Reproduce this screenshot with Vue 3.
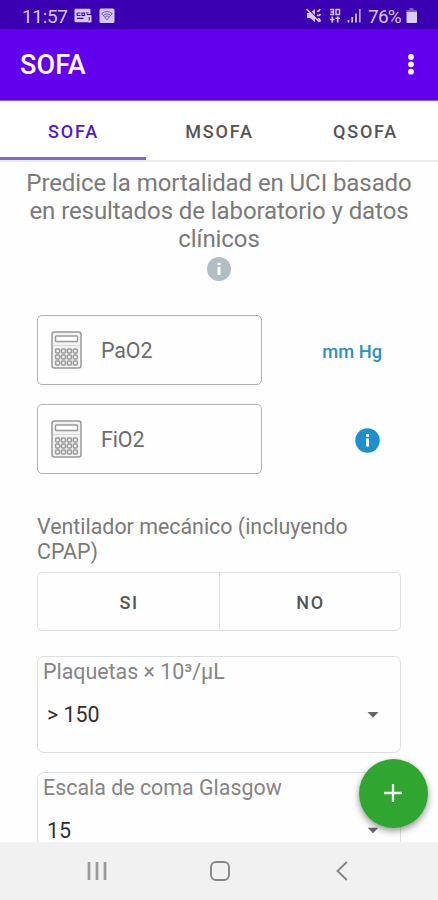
<script setup>
import { ref } from 'vue'

const tabs = ['SOFA', 'MSOFA', 'QSOFA']
const active = ref(0)
const inputs = [
  { label: 'PaO2', unit: 'mm Hg' },
  { label: 'FiO2', unit: '' },
]
const selects = [
  { label: 'Plaquetas × 10³/µL', value: '> 150' },
  { label: 'Escala de coma Glasgow', value: '15' },
]
const keyRows = [18.5, 24.5, 30.5]
const keyCols = [6.5, 12.4, 18.3, 24.2]
</script>

<template>
  <div class="phone">
    <div class="status">
      <span class="clock">11:57</span>
      <svg class="st-card" width="18" height="16" viewBox="0 0 18 16">
        <path d="M1.500 .8h14a1 1 0 0 1 1 1V6h-3.500v8.200H1.500a1 1 0 0 1-1-1V1.800a1 1 0 0 1 1-1z" fill="#d5c9f2" />
        <path d="M6.500 5H4q-1 0-1 1.300T4 7.500h2.500M8 5h2.500v2.500H8zM3 10.300h6.500M12 5h2.500" fill="none" stroke="#3b08a9" stroke-width="1.200" />
        <rect x="13" y="7" width="4.500" height="7.500" rx=".8" fill="#d5c9f2" />
        <path d="M15.200 9v3.500" stroke="#3b08a9" />
      </svg>
      <svg class="st-wifi" width="16" height="16" viewBox="0 0 16 16">
        <rect x=".5" y=".5" width="15" height="14.500" rx="1.500" fill="#d5c9f2" />
        <path d="M2.800 5.500q5.200-4 10.400 0L8 11.800z M5 6.800q3-2 6 0M6.500 8.500q1.500-1 3 0" fill="none" stroke="#7355bf" />
      </svg>
      <span class="grow"></span>
      <svg class="st-mute" width="16" height="16" viewBox="0 0 16 16">
        <path d="M1 5h3l5-4v13l-5-4H1z" fill="#d5c9f2" />
        <path d="M1.500 .5l13 13" stroke="#3b03ac" stroke-width="1.200" />
        <path d="M.5 1l13 13M11 3q2 1 3-2M11 7q2 1.500 3.500-1M12 11q2-1 2 3" fill="none" stroke="#d5c9f2" stroke-width="1.600" />
      </svg>
      <svg class="st-net" width="12" height="16" viewBox="0 0 12 16">
        <path d="M1 1.500h3.500v5H1M1.500 4h3M7 1.500h3.500v5H7z" fill="none" stroke="#d5c9f2" stroke-width="1.400" />
        <path d="M3.300 8.500v6M1 11.500h4.500M8.700 8.500v6M6.500 10.200H11" fill="none" stroke="#d5c9f2" stroke-width="1.600" />
      </svg>
      <svg class="st-signal" width="15" height="16" viewBox="0 0 15 16">
        <path d="M1.500 12v2.500M5.200 9v5.500M9 5.500v9" stroke="#d5c9f2" stroke-width="1.700" />
        <path d="M12.800 1v13.500" stroke="#b9a6e8" stroke-width="1.700" />
      </svg>
      <span class="pct">76%</span>
      <svg class="st-batt" width="12" height="16" viewBox="0 0 12 16">
        <path d="M3.500 0h4v2h3.500v3H0.500V2h3z" fill="#7c5bca" />
        <path d="M.5 4h10.500v10a1 1 0 0 1-1 1H1.500a1 1 0 0 1-1-1z" fill="#d8cdf2" />
      </svg>
    </div>

    <header class="appbar">
      <h1>SOFA</h1>
      <svg width="8" height="22" viewBox="0 0 8 22" fill="#fff">
        <circle cx="4" cy="3" r="2.900" /><circle cx="4" cy="10.300" r="2.900" /><circle cx="4" cy="17.700" r="2.900" />
      </svg>
    </header>

    <nav class="tabs">
      <button v-for="(t, i) in tabs" :key="t" :class="['tab', { on: i === active }]" @click="active = i"><span>{{ t }}</span></button>
    </nav>

    <main class="content">
      <p class="intro">Predice la mortalidad en UCI basado<br>en resultados de laboratorio y datos<br>clínicos</p>
      <svg class="info-main" width="24" height="24" viewBox="0 0 24 24">
        <circle cx="12" cy="12" r="12" fill="#b0bec5" />
        <path d="M10.500 10h3v8h-3z M10.500 5.800h3v2.500h-3z" fill="#fff" />
      </svg>

      <div v-for="f in inputs" :key="f.label" class="row">
        <div class="field">
          <svg class="calc" width="31" height="38" viewBox="0 0 31 38" fill="none" stroke="#999">
            <rect x="1" y="1" width="29" height="36" rx="2.500" stroke-width="1.500" fill="#f3f3f3" />
            <rect x="4.500" y="5" width="22" height="5.500" rx=".8" stroke-width="1.400" fill="#fff" />
            <path d="M2 14.500h27" stroke="#dadada" />
            <g v-for="y in keyRows" :key="y">
              <rect v-for="x in keyCols" :key="x" :x="x - 1.900" :y="y - .5" width="4" height="4" rx="1" stroke-width="1.500" />
            </g>
          </svg>
          <span>{{ f.label }}</span>
        </div>
        <div class="side">
          <span v-if="f.unit">{{ f.unit }}</span>
          <svg v-else width="25" height="25" viewBox="0 0 25 25">
            <circle cx="12.500" cy="12.500" r="12.200" fill="#1b90cf" />
            <path d="M11 10.500h3v8h-3z M11 6h3v2.700h-3z" fill="#fff" />
          </svg>
        </div>
      </div>

      <p class="question">Ventilador mecánico (incluyendo<br>CPAP)</p>
      <div class="toggle">
        <button>SI</button>
        <button>NO</button>
      </div>

      <div v-for="s in selects" :key="s.label" class="select">
        <div class="label">{{ s.label }}</div>
        <div class="value">
          <span>{{ s.value }}</span>
          <svg width="12" height="6" viewBox="0 0 12 6"><path d="M.5 0h11L6 5.700z" fill="#666" /></svg>
        </div>
      </div>
    </main>

    <button class="fab" aria-label="Agregar">
      <svg width="20" height="20" viewBox="0 0 20 20"><path d="M10 1v18M1 10h18" stroke="#fff" stroke-width="2.300" /></svg>
    </button>

    <footer class="navbar">
      <svg width="20" height="20" viewBox="0 0 20 20"><path d="M2 1v18M10 1v18M18 1v18" stroke="#999" stroke-width="2.700" /></svg>
      <svg width="20" height="20" viewBox="0 0 20 20"><rect x="1" y="1" width="18" height="18" rx="5" fill="none" stroke="#858585" stroke-width="1.900" /></svg>
      <svg width="20" height="20" viewBox="0 0 20 20"><path d="M14.800 1L5.500 10l9.300 9" fill="none" stroke="#858585" stroke-width="1.900" /></svg>
    </footer>
  </div>
</template>

<style>
body { margin: 0; }
</style>

<style scoped>
* { box-sizing: border-box; }
.phone {
  position: relative;
  width: 438px;
  height: 900px;
  overflow: hidden;
  display: flex;
  flex-direction: column;
  background: #fefefe;
  font-family: Roboto, "Liberation Sans", sans-serif;
}
button { font-family: inherit; background: none; border: 0; padding: 0; }
h1, p { margin: 0; }
.status {
  flex: none;
  height: 29px;
  padding: 3px 20px 0 22px;
  display: flex;
  align-items: center;
  background: #3a00b1;
  color: #d5c9f2;
  font-size: 19px;
}
.clock { width: 52px; letter-spacing: -.35px; }
.st-wifi { margin-left: 7px; }
.grow { flex: 1; }
.st-net { margin-left: 7px; }
.st-signal { margin-left: 6px; }
.pct { margin-left: 6px; width: 34px; letter-spacing: -.8px; }
.st-batt { margin-left: 4px; }
.appbar {
  flex: none;
  height: 71px;
  padding: 1px 23px 0 20px;
  display: flex;
  align-items: center;
  justify-content: space-between;
  background: #6200ee;
  color: #fff;
}
h1 { font-size: 27px; font-weight: 500; line-height: 30px; letter-spacing: .1px; }
.tabs {
  flex: none;
  height: 62px;
  display: grid;
  grid-template-columns: repeat(3, 1fr);
  border-top: 1px solid #8b55e3;
  border-bottom: 2px solid #ececec;
  background: #fff;
}
.tab {
  display: flex;
  align-items: center;
  justify-content: center;
  padding: 5px 0 0 1px;
  border-bottom: 3px solid transparent;
  color: #555;
  font-size: 18px;
  font-weight: 500;
  letter-spacing: 1.8px;
}
.tab.on { color: #5118dc; border-color: #8563d8; }
.content {
  flex: 1;
  min-height: 0;
  overflow: hidden;
  padding: 7px 37px 0;
}
.intro {
  margin: 0 -20px;
  text-align: center;
  font-size: 24px;
  line-height: 28px;
  letter-spacing: -.08px;
  color: #7a7a7a;
}
.info-main { display: block; margin: 4px auto 34px; }
.row { display: flex; height: 70px; }
.row + .row { margin-top: 19px; }
.field {
  width: 225px;
  border: 1.500px solid #b0b0b0;
  border-radius: 5px;
  display: flex;
  align-items: center;
  padding-left: 13px;
  font-size: 21.400px;
  color: #6c6c6c;
}
.field span { margin-left: 19px; letter-spacing: -.1px; }
.side {
  flex: 1;
  display: flex;
  align-items: center;
  justify-content: flex-end;
  padding: 3px 19px 0 0;
  color: #2a91c6;
  font-size: 18.300px;
  font-weight: 500;
}
.side svg { margin-right: 2px; }
.question {
  margin-top: 40px;
  font-size: 21.400px;
  line-height: 25px;
  color: #7a7a7a;
}
.toggle {
  margin-top: 8px;
  height: 59px;
  display: grid;
  grid-template-columns: 1fr 1fr;
  border: 1px solid #e0e0e0;
  border-radius: 5px;
}
.toggle button { padding: 1px 0 0 1px; font-size: 18px; font-weight: 500; letter-spacing: 1.6px; color: #555; }
.toggle button + button { border-left: 1px solid #e0e0e0; }
.select {
  height: 97px;
  margin-top: 25px;
  border: 1.500px solid #dcdfe1;
  border-radius: 7px;
  padding: 2px 21px 0 5px;
}
.select + .select { margin-top: 19px; }
.label { font-size: 21.400px; line-height: 26px; color: #858585; white-space: nowrap; }
.value {
  margin-top: 20px;
  padding-left: 4px;
  display: flex;
  align-items: center;
  justify-content: space-between;
  font-size: 21.400px;
  line-height: 20px;
  color: #303030;
}
.select + .select .label,
.select + .select .value { transform: translateY(-.5px); }
.fab {
  position: absolute;
  left: 359px;
  top: 759px;
  width: 69px;
  height: 69px;
  border-radius: 50%;
  background: #2fa62f;
  box-shadow: 0 3px 7px rgba(0, 0, 0, .42);
  display: grid;
  place-items: center;
}
.fab svg { margin: 0 1px 1px 0; }
.navbar {
  flex: none;
  height: 58px;
  padding: 0 86px 0 87px;
  display: flex;
  align-items: center;
  justify-content: space-between;
  background: #f1f1f1;
}
</style>
